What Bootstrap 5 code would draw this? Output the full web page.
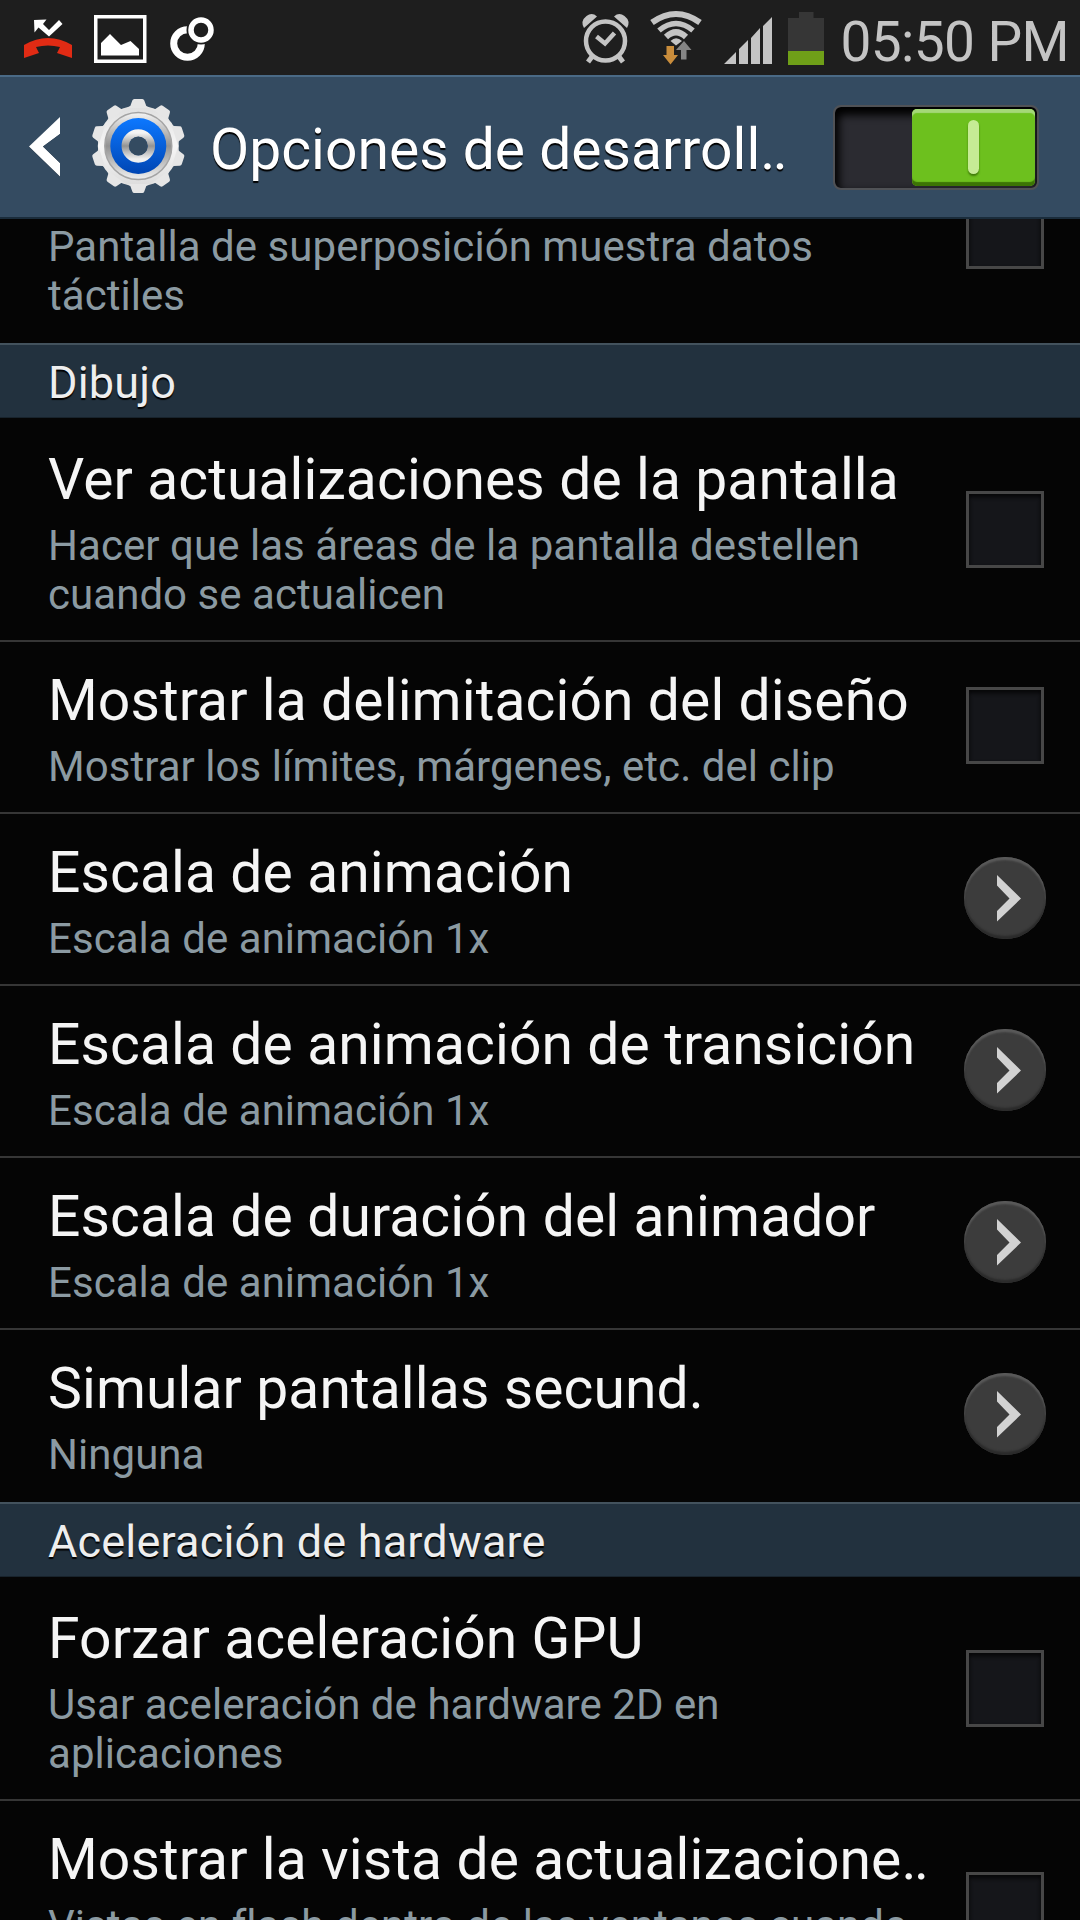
<!DOCTYPE html>
<html lang="es">
<head>
<meta charset="utf-8">
<meta name="viewport" content="width=device-width, initial-scale=1">
<title>Opciones de desarrollador</title>
<link href="https://cdn.jsdelivr.net/npm/bootstrap@5.3.0/dist/css/bootstrap.min.css" rel="stylesheet">
<style>
body{font-family:Roboto,"Noto Sans",sans-serif;background:#050505;width:1080px;height:1920px;overflow:hidden}
svg{display:block;flex:none}
.screen{height:1920px;overflow:hidden}
.statusbar{height:75px;background:#1e1e1e}
.clock{font-size:55px;line-height:64px;letter-spacing:-.6px;color:#c4c4c4;white-space:nowrap;padding:10px 0 0 8px;margin-right:11px}
.actionbar{height:144px;background:#344b61;border-top:2px solid #4a6a86;border-bottom:2px solid #1a2c3b}
.bar-title{font-size:57px;line-height:67px;color:#fff;text-shadow:0 2px 1px #000;white-space:nowrap;padding-top:4px;margin-left:-3px}
.dots{letter-spacing:-2.500px}
.toggle{width:206px;height:85px;border:2px solid #505256;border-radius:8px;background:#2b2b31;box-shadow:inset 2px 6px 9px 2px #000;padding:2px;margin-right:41px}
.knob{width:123px;height:77px;border-radius:5px;background:#6dc01e;box-shadow:inset 0 4px 1px #a5d878,inset 0 -4px 1px #3c7405}
.knob i{width:11px;height:54px;border-radius:6px;background:#c6eb95;box-shadow:0 2px 2px #3f7a08}
.item{height:172px;border-bottom:2px solid #363636;padding:25px 34px 0 48px}
.item.tall{height:222px}
.section + .item{padding-top:26px}
.item.cut{height:124px;padding-top:3px;overflow:hidden;border-bottom:0}
.item-title{font-size:57px;line-height:67px;letter-spacing:.1px;color:#f5f5f5;margin-bottom:8px;white-space:nowrap}
.item-note{font-size:42px;line-height:49px;letter-spacing:.05px;color:#8b9aa2;white-space:nowrap}
.section{height:75px;background:#22313e;border-top:2px solid #43525d;border-bottom:1px solid #18232c;padding:11px 48px 0;font-size:45px;line-height:53px;letter-spacing:.18px;color:#eee;text-shadow:0 2px 1px #000;margin-bottom:2px}
.box{width:78px;height:77px;border:3px solid #474747;background:#15161a;box-shadow:inset 0 3px 4px #060607;flex:none;margin:46px 2px 0 0}
.section + .item .box{margin-top:45px}
.item:not(.tall) .box{margin-top:20px}
.item.cut .box{margin-top:-30px}
.go{width:82px;height:82px;border-radius:50%;background:#3c3c3c;box-shadow:inset 0 3px 2px #5a5a5a,inset 0 -3px 2px #2b2b2b;flex:none;margin-top:18px}
</style>
</head>
<body>
<div class="screen d-flex flex-column">
<header class="statusbar d-flex justify-content-between flex-shrink-0">
 <svg width="230" height="75" viewBox="0 0 230 75">
  <path d="M24 45Q48 31 72 45V58L57 53L60 47Q48 44 36 47L39 53L24 58Z" fill="#e12b14"/>
  <path d="M34 20L46.500 19.500L43 24L49 30L59 20L62.500 24L49 36.500L38.500 27.500L34.500 32.500Z" fill="#fff"/>
  <path d="M94 15H146.500V63H94ZM97.500 18.500V59.500H143V18.500Z" fill="#fff" fill-rule="evenodd"/>
  <path d="M101 55.500V43L110 34L121 45L130.500 41L139 49V55.500Z" fill="#fff"/>
  <circle cx="187.500" cy="43.500" r="13.800" fill="none" stroke="#fff" stroke-width="7"/>
  <circle cx="201" cy="30" r="14.500" fill="#1e1e1e"/>
  <circle cx="201" cy="30" r="10" fill="none" stroke="#fff" stroke-width="5.500"/>
 </svg>
 <div class="d-flex">
  <svg width="260" height="75" viewBox="574 0 260 75">
   <g fill="none" stroke="#c4c4c4">
    <circle cx="607.500" cy="41" r="19.500" stroke-width="4.500"/>
    <path d="M598.500 36.500L607 43.500L616.500 33" stroke-width="4.500"/>
    <path d="M594.500 56L590 62M620.500 56L625 62" stroke-width="5"/>
   </g>
   <path d="M586 28L599 16.500Q594 12 588.500 16Q582 21 586 28ZM629 28L616 16.500Q621 12 626.500 16Q633 21 629 28Z" fill="#c4c4c4"/>
   <g fill="none" stroke="#c4c4c4" stroke-width="6">
    <path d="M654 22.500Q678 5.500 702 22.500"/>
    <path d="M661 30.500Q678 16.500 695 30.500" stroke-width="5.500"/>
    <path d="M668 37Q678 27.500 688 37"/>
   </g>
   <path d="M672.500 41Q678 35.500 684 41L678 45.500Z" fill="#c4c4c4"/>
   <path d="M668.500 46H676V55H680L672.500 64.500L665 55H668.500Z" fill="#c98d3c"/>
   <path d="M683 59.500H688.500V50H693.500L686 41L678 50H683Z" fill="#858585"/>
   <path d="M726 64L738 52V64ZM741 64V49L750 40V64ZM753 64V38L762 28V64ZM765 64V26L774 17V64Z" fill="#c4c4c4"/>
   <path d="M790 51V18H801V12H815.500V18H826V51Z" fill="#363636"/>
   <path d="M790 51H826V65H790Z" fill="#6f9f18"/>
  </svg>
  <div class="clock">05:50 PM</div>
 </div>
</header>
<nav class="actionbar d-flex align-items-center flex-shrink-0">
 <svg width="213" height="140" viewBox="0 77 213 140">
  <defs>
   <linearGradient id="metal" x1="0" y1="0" x2="0" y2="1"><stop offset="0" stop-color="#e0e0e0"/><stop offset=".5" stop-color="#f6f6f6"/><stop offset="1" stop-color="#dcdcdc"/></linearGradient>
   <linearGradient id="blue" x1="0" y1="0" x2="0" y2="1"><stop offset="0" stop-color="#0d78ff"/><stop offset="1" stop-color="#0046b4"/></linearGradient>
   <linearGradient id="ring" x1="0" y1="0" x2="0" y2="1"><stop offset="0" stop-color="#f4f4f4"/><stop offset=".5" stop-color="#929292"/><stop offset="1" stop-color="#f0f0f0"/></linearGradient>
   <path id="tooth" d="M-11 -38L-8 -40L-6 -45.500Q-5.500 -47 -4 -47H4Q5.500 -47 6 -45.500L8 -40L11 -38Z"/>
  </defs>
  <path d="M60 118V177L29 147Z" fill="#17222d" opacity=".6"/>
  <path d="M60 117V134L43 146.500L60 163V176.500L29 146.500Z" fill="#fff"/>
  <path d="M60 134L43 146.500L60 163Z" fill="#344b61"/>
  <g transform="translate(138.300 146)" fill="url(#metal)">
   <circle r="40.500"/>
   <g fill="#e6e6e6">
   <use href="#tooth"/><use href="#tooth" transform="rotate(36)"/><use href="#tooth" transform="rotate(72)"/><use href="#tooth" transform="rotate(108)"/><use href="#tooth" transform="rotate(144)"/><use href="#tooth" transform="rotate(180)"/><use href="#tooth" transform="rotate(216)"/><use href="#tooth" transform="rotate(252)"/><use href="#tooth" transform="rotate(288)"/><use href="#tooth" transform="rotate(324)"/>
   </g>
   <circle r="33.500" fill="url(#ring)" stroke="#a4a4a4" stroke-width="1.500"/>
   <circle r="28" fill="url(#blue)"/>
   <circle r="13" fill="none" stroke="url(#ring)" stroke-width="7.500"/>
   <circle r="9.500" fill="#344b61"/>
  </g>
 </svg>
 <div class="bar-title">Opciones de desarroll<span class="dots">..</span></div>
 <div class="toggle d-flex justify-content-end ms-auto"><div class="knob d-flex align-items-center justify-content-center"><i></i></div></div>
</nav>
<main>
 <div class="item cut d-flex justify-content-between"><div class="item-note">Pantalla de superposición muestra datos<br>táctiles</div><div class="box"></div></div>
 <div class="section">Dibujo</div>
 <div class="item tall d-flex justify-content-between"><div><div class="item-title">Ver actualizaciones de la pantalla</div><div class="item-note">Hacer que las áreas de la pantalla destellen<br>cuando se actualicen</div></div><div class="box"></div></div>
 <div class="item d-flex justify-content-between"><div><div class="item-title">Mostrar la delimitación del diseño</div><div class="item-note">Mostrar los límites, márgenes, etc. del clip</div></div><div class="box"></div></div>
 <div class="item d-flex justify-content-between"><div><div class="item-title">Escala de animación</div><div class="item-note">Escala de animación 1x</div></div><div class="go"><svg width="82" height="82" viewBox="0 0 82 82"><path d="M33 18L57 41.500L33 64.500V54L45.500 41.500L33 28.500Z" fill="#d2d2d2"/></svg></div></div>
 <div class="item d-flex justify-content-between"><div><div class="item-title">Escala de animación de transición</div><div class="item-note">Escala de animación 1x</div></div><div class="go"><svg width="82" height="82" viewBox="0 0 82 82"><path d="M33 18L57 41.500L33 64.500V54L45.500 41.500L33 28.500Z" fill="#d2d2d2"/></svg></div></div>
 <div class="item d-flex justify-content-between"><div><div class="item-title">Escala de duración del animador</div><div class="item-note">Escala de animación 1x</div></div><div class="go"><svg width="82" height="82" viewBox="0 0 82 82"><path d="M33 18L57 41.500L33 64.500V54L45.500 41.500L33 28.500Z" fill="#d2d2d2"/></svg></div></div>
 <div class="item border-bottom-0 d-flex justify-content-between"><div><div class="item-title">Simular pantallas secund.</div><div class="item-note">Ninguna</div></div><div class="go"><svg width="82" height="82" viewBox="0 0 82 82"><path d="M33 18L57 41.500L33 64.500V54L45.500 41.500L33 28.500Z" fill="#d2d2d2"/></svg></div></div>
 <div class="section">Aceleración de hardware</div>
 <div class="item tall d-flex justify-content-between"><div><div class="item-title">Forzar aceleración GPU</div><div class="item-note">Usar aceleración de hardware 2D en<br>aplicaciones</div></div><div class="box"></div></div>
 <div class="item tall d-flex justify-content-between"><div><div class="item-title">Mostrar la vista de actualizacione<span class="dots">..</span></div><div class="item-note">Vistas en flash dentro de las ventanas cuando</div></div><div class="box"></div></div>
</main>
</div>
<script src="https://cdn.jsdelivr.net/npm/bootstrap@5.3.0/dist/js/bootstrap.bundle.min.js"></script>
</body>
</html>
